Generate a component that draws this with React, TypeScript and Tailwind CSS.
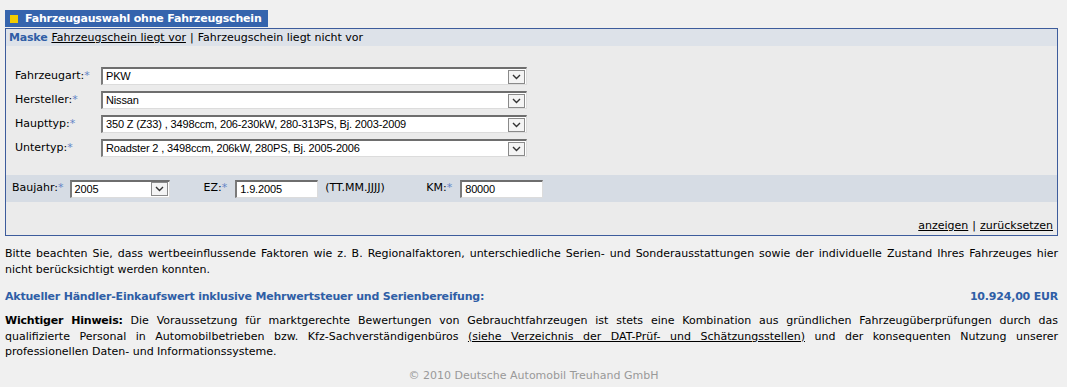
import React from "react";

const Star = () => <span className="text-[#6485c6]">*</span>;

function Arrow() {
  return (
    <div className="w-[17px] h-[14px] border border-[#8a8a8a] bg-[#f4f4f4] flex items-center justify-center">
      <svg width="9" height="6" viewBox="0 0 9 6">
        <path d="M1 1 L4.5 4.5 L8 1" fill="none" stroke="#333" strokeWidth="1.4" />
      </svg>
    </div>
  );
}

const boxCls =
  "h-[18px] bg-white border-t-2 border-l-2 border-b border-r border-t-[#6e6e6e] border-l-[#7a7a7a] border-b-[#dcdcdc] border-r-[#dcdcdc] flex items-center";
const boxText = "font-['Liberation_Sans',Arial,sans-serif] text-[11px] tracking-[-0.15px] text-black leading-none";

function FakeSelect({ value, w }: { value: string; w: string }) {
  return (
    <div className={`${w} ${boxCls} justify-between pl-[3px] pr-[1px]`}>
      <span className={boxText}>{value}</span>
      <Arrow />
    </div>
  );
}

function FakeInput({ value }: { value: string }) {
  return (
    <div className={`w-[83px] ${boxCls} pl-[3px]`}>
      <span className={boxText}>{value}</span>
    </div>
  );
}

const J = "[text-align-last:justify] text-justify";

export default function App() {
  const rows: [string, string][] = [
    ["Fahrzeugart:", "PKW"],
    ["Hersteller:", "Nissan"],
    ["Haupttyp:", "350 Z (Z33) , 3498ccm, 206-230kW, 280-313PS, Bj. 2003-2009"],
    ["Untertyp:", "Roadster 2 , 3498ccm, 206kW, 280PS, Bj. 2005-2006"],
  ];
  return (
    <div className="w-[1067px] h-[387px] bg-[#f0f0f0] pt-[10px] px-[5px] font-['DejaVu_Sans',Verdana,sans-serif] text-[11px] text-[#222] overflow-hidden">
      {/* Title tab */}
      <div className="inline-flex items-center h-[17px] bg-[#3564ad] pl-[5px] pr-[6px]">
        <span className="w-[8px] h-[8px] bg-[#f2cc00] mr-[7px]" />
        <span className="font-bold text-white text-[11px] tracking-[-0.2px] leading-none">
          Fahrzeugauswahl ohne Fahrzeugschein
        </span>
      </div>
      {/* Panel */}
      <div className="w-[1053px] h-[208px] border border-[#3d5c9c] bg-[#ebebeb] flex flex-col">
        <div className="h-[17px] bg-[#dde2e9] flex items-center pl-[3px] leading-none">
          <span className="font-bold text-[#2f5ea6] tracking-[-0.2px]">Maske</span>
          <span className="ml-[4px] underline text-black">Fahrzeugschein liegt vor</span>
          <span className="mx-[4px] text-black">|</span>
          <span className="text-black">Fahrzeugschein liegt nicht vor</span>
        </div>
        <div className="flex flex-col gap-[6px] mt-[21px] pl-[9px]">
          {rows.map(([l, v]) => (
            <div key={l} className="flex items-center">
              <div className="w-[86px] text-black">
                {l}
                <Star />
              </div>
              <FakeSelect value={v} w="w-[426px]" />
            </div>
          ))}
        </div>
        <div className="mt-[18px] h-[27px] bg-[#d6dce4] flex items-center pl-[6px] text-black">
          <span>Baujahr:</span>
          <Star />
          <div className="ml-[6px]">
            <FakeSelect value="2005" w="w-[100px]" />
          </div>
          <span className="ml-[34px]">EZ:</span>
          <Star />
          <div className="ml-[8px]">
            <FakeInput value="1.9.2005" />
          </div>
          <span className="ml-[7px] w-[101px]">(TT.MM.JJJJ)</span>
          <span>KM:</span>
          <Star />
          <div className="ml-[8px]">
            <FakeInput value="80000" />
          </div>
        </div>
        <div className="flex-1 flex items-end justify-end pr-[4px] pb-[2px] text-black leading-[14px]">
          <span className="underline">anzeigen</span>
          <span className="mx-[4px]">|</span>
          <span className="underline">zurücksetzen</span>
        </div>
      </div>
      {/* Text */}
      <div className="w-[1053px] mt-[10px] leading-[16px] text-black">
        <div className={J}>
          Bitte beachten Sie, dass wertbeeinflussende Faktoren wie z. B. Regionalfaktoren, unterschiedliche Serien- und Sonderausstattungen sowie der individuelle Zustand Ihres Fahrzeuges hier
        </div>
        <div>nicht berücksichtigt werden konnten.</div>
      </div>
      <div className="w-[1053px] mt-[11px] flex justify-between font-bold text-[#2f5ea6] leading-[16px] tracking-[-0.2px]">
        <span>Aktueller Händler-Einkaufswert inklusive Mehrwertsteuer und Serienbereifung:</span>
        <span>10.924,00 EUR</span>
      </div>
      <div className="w-[1053px] mt-[8px] leading-[15.5px] text-black">
        <div className={J}>
          <b className="tracking-[-0.2px]">Wichtiger Hinweis:</b> Die Voraussetzung für marktgerechte Bewertungen von Gebrauchtfahrzeugen ist stets eine Kombination aus gründlichen Fahrzeugüberprüfungen durch das
        </div>
        <div className={J}>
          qualifizierte Personal in Automobilbetrieben bzw. Kfz-Sachverständigenbüros{" "}
          <span className="underline">(siehe Verzeichnis der DAT-Prüf- und Schätzungsstellen)</span> und der konsequenten Nutzung unserer
        </div>
        <div>professionellen Daten- und Informationssysteme.</div>
      </div>
      <div className="w-[1057px] mt-[8px] text-center text-[#999] leading-[16px]">
        © 2010 Deutsche Automobil Treuhand GmbH
      </div>
    </div>
  );
}
